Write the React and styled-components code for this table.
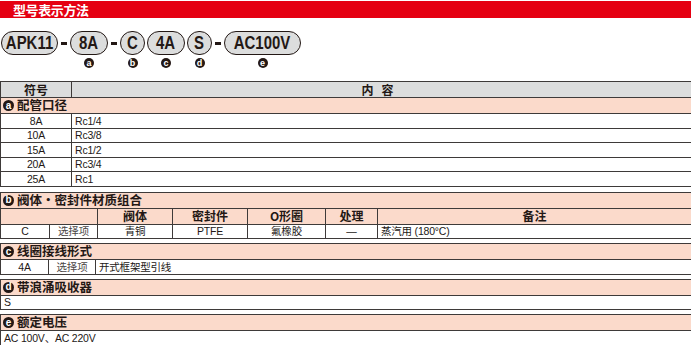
import React from 'react';
import styled, { createGlobalStyle } from 'styled-components';

const Global = createGlobalStyle`
  html, body { margin: 0; padding: 0; background: #fff; }
  body {
    font-family: "Liberation Sans", "Noto Sans CJK SC", sans-serif;
    color: #231815;
  }
`;

const LINE = '#3e3a39';

const Page = styled.div`
  width: 691px;
  display: flex;
  flex-direction: column;
`;

const TitleBar = styled.div`
  margin-top: 1px;
  height: 17px;
  background: #e50012;
  color: #fff;
  font-family: "Noto Sans CJK SC", sans-serif;
  font-weight: 700;
  font-size: 13px;
  line-height: 1;
  letter-spacing: -0.4px;
  padding-left: 13px;
  display: flex;
  align-items: center;
`;

const CodeRow = styled.div`
  display: flex;
  align-items: flex-start;
  gap: 2px;
  margin-top: 13px;
  padding-left: 1px;
`;

const Part = styled.div`
  display: flex;
  flex-direction: column;
  align-items: center;
`;

const Pill = styled.div`
  box-sizing: border-box;
  width: ${p => p.$w}px;
  height: 24px;
  border: 1.5px solid #231815;
  border-radius: 12px;
  background: #dcdddd;
  display: flex;
  align-items: center;
  justify-content: center;
`;

const PillText = styled.span`
  display: inline-block;
  font-family: "Liberation Sans", sans-serif;
  font-weight: 700;
  font-size: 18px;
  line-height: 1;
  color: #231815;
  white-space: nowrap;
  transform: scaleX(0.83);
`;

const Dash = styled.div`
  width: 6px;
  height: 3px;
  background: #231815;
  margin: 11px 1px 0;
`;

const Mark = styled.span`
  flex: none;
  width: ${p => p.$size}px;
  height: ${p => p.$size}px;
  border-radius: 50%;
  background: #231815;
  color: #fff;
  font-family: "Liberation Sans", sans-serif;
  font-weight: 700;
  font-size: ${p => p.$size - 1}px;
  line-height: ${p => p.$size - 1}px;
  display: inline-flex;
  align-items: center;
  justify-content: center;
  margin-top: ${p => p.$mt || 0}px;
`;

const Block = styled.div`
  margin-top: ${p => p.$mt}px;
  border-top: 1px solid ${LINE};
  display: flex;
  flex-direction: column;
`;

const Row = styled.div`
  display: grid;
  grid-template-columns: ${p => p.$cols || '1fr'};
  height: ${p => p.$h}px;
  border-bottom: 1px solid ${LINE};
  background: ${p => p.$bg || '#fff'};
`;

const Cell = styled.div`
  border-left: 1px solid ${LINE};
  display: flex;
  align-items: center;
  justify-content: ${p => (p.$center ? 'center' : 'flex-start')};
  padding: 0 ${p => (p.$center ? 0 : 3)}px;
  font-size: 10.5px;
  line-height: 1;
  letter-spacing: -0.2px;
  color: ${p => (p.$muted ? '#4a4544' : '#231815')};
  white-space: nowrap;
`;

const HeadCell = styled(Cell)`
  font-family: "Noto Sans CJK SC", sans-serif;
  font-weight: 700;
  font-size: 12px;
  letter-spacing: ${p => p.$spread || 0}px;
`;

const SectionTitle = styled.div`
  border-left: 1px solid ${LINE};
  display: flex;
  align-items: center;
  gap: 3px;
  padding-left: 2px;
  font-family: "Noto Sans CJK SC", sans-serif;
  font-weight: 700;
  font-size: 12.5px;
  line-height: 1;
`;

const PINK = '#fbdacb';
const GRAY = '#dcdddd';

const parts = [
  { t: 'APK11', w: 57 },
  { dash: true },
  { t: '8A', w: 38, m: 'a' },
  { dash: true },
  { t: 'C', w: 25, m: 'b' },
  { t: '4A', w: 38, m: 'c' },
  { t: 'S', w: 25, m: 'd' },
  { dash: true },
  { t: 'AC100V', w: 77, m: 'e' },
];

const pipes = ['8A|Rc1/4', '10A|Rc3/8', '15A|Rc1/2', '20A|Rc3/4', '25A|Rc1'];

const Section = ({ m, children }) => (
  <Row $h={15} $bg={PINK}>
    <SectionTitle>
      <Mark $size={11}>{m}</Mark>
      <span>{children}</span>
    </SectionTitle>
  </Row>
);

export default function App() {
  const bCols = '49px 48px 75px 75px 78px 52px 1fr';
  const bSub = '97px 75px 75px 78px 52px 1fr';
  return (
    <Page>
      <Global />
      <TitleBar>型号表示方法</TitleBar>
      <CodeRow>
        {parts.map((p, i) =>
          p.dash ? (
            <Dash key={i} />
          ) : (
            <Part key={i}>
              <Pill $w={p.w}>
                <PillText>{p.t}</PillText>
              </Pill>
              {p.m && (
                <Mark $size={10} $mt={3}>
                  {p.m}
                </Mark>
              )}
            </Part>
          )
        )}
      </CodeRow>

      <Block $mt={13}>
        <Row $h={15} $bg={GRAY} $cols="71px 1fr">
          <HeadCell $center>符号</HeadCell>
          <HeadCell $center $spread={8}>内容</HeadCell>
        </Row>
        <Section m="a">配管口径</Section>
        {pipes.map(s => {
          const [a, b] = s.split('|');
          return (
            <Row key={a} $h={13.5} $cols="71px 1fr">
              <Cell $center>{a}</Cell>
              <Cell>{b}</Cell>
            </Row>
          );
        })}
      </Block>

      <Block $mt={5}>
        <Section m="b">阀体・密封件材质组合</Section>
        <Row $h={15} $bg={PINK} $cols={bSub}>
          <HeadCell />
          <HeadCell $center>阀体</HeadCell>
          <HeadCell $center>密封件</HeadCell>
          <HeadCell $center>O形圈</HeadCell>
          <HeadCell $center>处理</HeadCell>
          <HeadCell $center>备注</HeadCell>
        </Row>
        <Row $h={13.5} $cols={bCols}>
          <Cell $center>C</Cell>
          <Cell $center $muted>选择项</Cell>
          <Cell $center>青铜</Cell>
          <Cell $center>PTFE</Cell>
          <Cell $center>氟橡胶</Cell>
          <Cell $center>—</Cell>
          <Cell>蒸汽用 (180°C)</Cell>
        </Row>
      </Block>

      <Block $mt={4}>
        <Section m="c">线圈接线形式</Section>
        <Row $h={13.5} $cols="48px 47px 1fr">
          <Cell $center>4A</Cell>
          <Cell $center $muted>选择项</Cell>
          <Cell>开式框架型引线</Cell>
        </Row>
      </Block>

      <Block $mt={4}>
        <Section m="d">带浪涌吸收器</Section>
        <Row $h={13.5}>
          <Cell>S</Cell>
        </Row>
      </Block>

      <Block $mt={4}>
        <Section m="e">额定电压</Section>
        <Row $h={13.5}>
          <Cell>AC 100V、AC 220V</Cell>
        </Row>
      </Block>
    </Page>
  );
}
